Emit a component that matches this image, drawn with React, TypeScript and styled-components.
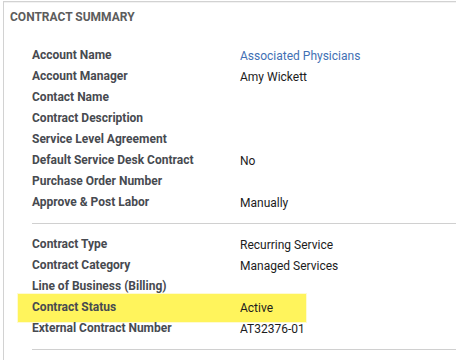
import React from "react";
import styled, { createGlobalStyle } from "styled-components";

// Data
type Field = { label: string; value?: string; link?: boolean; highlight?: boolean };

const general: Field[] = [
  { label: "Account Name", value: "Associated Physicians", link: true },
  { label: "Account Manager", value: "Amy Wickett" },
  { label: "Contact Name" },
  { label: "Contract Description" },
  { label: "Service Level Agreement" },
  { label: "Default Service Desk Contract", value: "No" },
  { label: "Purchase Order Number" },
  { label: "Approve & Post Labor", value: "Manually" },
];

const billing: Field[] = [
  { label: "Contract Type", value: "Recurring Service" },
  { label: "Contract Category", value: "Managed Services" },
  { label: "Line of Business (Billing)" },
  { label: "Contract Status", value: "Active", highlight: true },
  { label: "External Contract Number", value: "AT32376-01" },
];

const GlobalStyle = createGlobalStyle`
  html, body {
    margin: 0;
    padding: 0;
    background: #ffffff;
  }
  body {
    font-family: Roboto, "Liberation Sans", Arial, sans-serif;
    font-size: 12px;
  }
`;

export default function App() {
  return (
    <>
      <GlobalStyle />
      <Styled.Page>
        <Styled.Panel>
          <Styled.Header>Contract Summary</Styled.Header>
          <Styled.Body>
            <Styled.Section>
              {general.map((f) => (
                <FieldRow key={f.label} field={f} />
              ))}
            </Styled.Section>
            <Styled.Divider />
            <Styled.Section>
              {billing.map((f) => (
                <FieldRow key={f.label} field={f} />
              ))}
            </Styled.Section>
            <Styled.Divider />
          </Styled.Body>
        </Styled.Panel>
      </Styled.Page>
    </>
  );
}

const FieldRow: React.FC<{ field: Field }> = ({ field }) => (
  <Styled.Row $highlight={field.highlight}>
    <Styled.Label>{field.label}</Styled.Label>
    <Styled.Value $link={field.link}>{field.value}</Styled.Value>
  </Styled.Row>
);

const Styled = {
  Page: styled.div`
    padding: 1px 0 0 3px;
    height: 360px;
    box-sizing: border-box;
  `,
  Panel: styled.div`
    height: 100%;
    border-top: 1px solid #d2d2d2;
    border-left: 1px solid #d2d2d2;
    box-sizing: border-box;
  `,
  Header: styled.div`
    padding: 5px 0 0 6px;
    height: 20px;
    line-height: 20px;
    font-size: 12px;
    font-weight: 700;
    text-transform: uppercase;
    color: #5c5c5c;
    box-shadow: inset 0 3px 0 -2px #f2f2f2;
  `,
  Body: styled.div`
    padding: 18px 0 0 28px;
  `,
  Section: styled.div`
    display: flex;
    flex-direction: column;
  `,
  Row: styled.div<{ $highlight?: boolean }>`
    position: relative;
    display: grid;
    grid-template-columns: 208px 1fr;
    height: 21px;
    line-height: 21px;
    &::before {
      content: "";
      display: ${(p) => (p.$highlight ? "block" : "none")};
      position: absolute;
      top: -3px;
      bottom: -4px;
      left: -14px;
      width: 288px;
      background: #fff45c;
      box-shadow: 0 0 0 1px rgba(255, 250, 190, 0.7);
      z-index: 0;
    }
    & > * {
      position: relative;
      z-index: 1;
    }
  `,
  Label: styled.div`
    font-weight: 700;
    color: #474a50;
    white-space: nowrap;
  `,
  Value: styled.div<{ $link?: boolean }>`
    padding-top: 1px;
    color: ${(p) => (p.$link ? "#4270b4" : "#1c1c1c")};
    white-space: nowrap;
  `,
  Divider: styled.div`
    height: 1px;
    background: #d0d0d0;
    margin: 10px 0 10px;
  `,
};
